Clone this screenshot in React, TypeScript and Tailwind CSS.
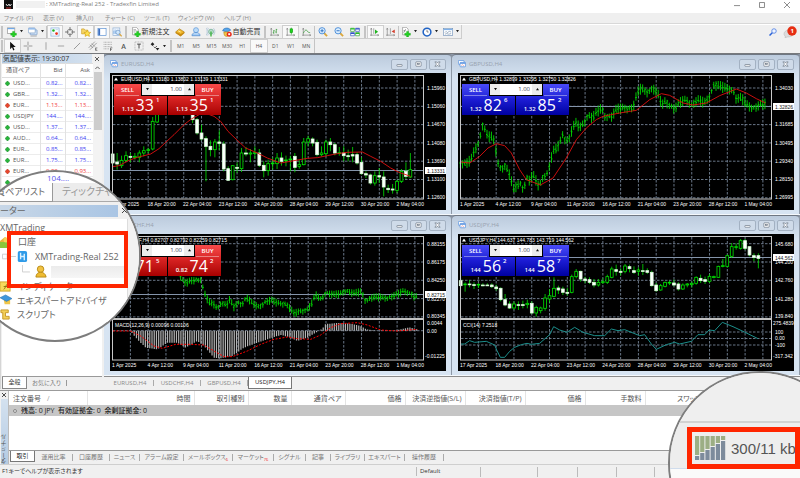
// src/App.tsx
import React from "react";

type Point = [number, number];
// open, high, low, close as chart heights, three units to a pixel
type Candle = [number, number, number, number];

const px = (value: number) => Math.round((value / 3) * 100) / 100;

const toPoints = (points: Point[]) =>
  points.map(([x, y]) => `${px(x)},${px(y)}`).join(" ");

const valueAt = (points: Point[], x: number) => {
  for (let i = 1; i < points.length; i++) {
    const [x0, y0] = points[i - 1];
    const [x1, y1] = points[i];
    if (x <= x1) return y0 + ((y1 - y0) * (x - x0)) / (x1 - x0);
  }
  return points[points.length - 1][1];
};

const eurCandles: (Candle | null)[] = [
  [243, 240, 291, 270], [267, 240, 290, 273], [278, 248, 285, 262], [262, 235, 268, 248],
  [250, 240, 268, 253], [253, 240, 260, 250], [253, 232, 268, 240], [240, 220, 250, 233],
  [232, 224, 240, 230], [228, 132, 232, 145], [147, 90, 150, 100],
  null, null, null, null, null, null, null,
  [125, 120, 150, 140], [140, 135, 185, 180], [180, 155, 202, 198], [197, 190, 325, 220],
  [220, 202, 250, 230], [230, 198, 253, 207], [207, 172, 232, 211], [213, 205, 295, 288],
  [287, 280, 323, 322], [320, 278, 322, 278], [283, 268, 300, 286], [287, 225, 297, 240],
  [240, 222, 250, 243], [243, 228, 268, 240], [240, 220, 258, 239], [240, 228, 282, 277],
  [277, 265, 313, 293], [293, 260, 308, 272], [272, 253, 290, 270], [272, 240, 288, 255],
  [255, 238, 278, 265], [263, 248, 280, 261], [260, 248, 295, 258], [250, 240, 298, 283],
  [280, 262, 287, 275], [275, 195, 277, 207], [207, 188, 220, 197], [198, 193, 220, 210],
  [208, 200, 250, 245], [245, 220, 250, 240], [242, 200, 250, 207], [207, 195, 235, 215],
  [215, 210, 247, 240], [240, 222, 248, 239], [240, 220, 265, 248], [248, 230, 265, 251],
  [245, 222, 268, 249], [245, 238, 275, 270], [268, 253, 305, 302], [302, 295, 315, 306],
  [306, 302, 335, 330], [330, 295, 338, 308], [308, 285, 330, 312], [312, 295, 370, 342],
  [346, 335, 360, 350], [348, 333, 362, 351], [352, 320, 360, 325], [325, 288, 330, 295],
  [295, 268, 318, 310], [312, 240, 315, 290],
];

const eurAverage: Point[] = [
  [8, 281], [27, 278], [57, 262], [82, 253], [122, 243], [147, 227], [167, 208], [192, 185],
  [222, 155], [244, 138], [280, 118], [312, 130], [332, 145], [354, 175], [382, 202],
  [407, 225], [442, 240], [472, 255], [512, 270], [552, 263], [592, 256], [622, 254],
  [652, 248], [682, 242], [712, 238], [757, 237], [782, 250], [812, 265], [842, 285],
  [867, 298], [902, 310],
];

const gbpTrend: Point[] = [
  [7, 270], [25, 272], [40, 260], [50, 230], [63, 210], [70, 165], [76, 150], [82, 175],
  [90, 190], [105, 194], [113, 230], [120, 270], [130, 290], [137, 275], [150, 292],
  [160, 325], [167, 350], [175, 340], [185, 330], [197, 348], [205, 315], [217, 325],
  [223, 305], [230, 315], [243, 342], [255, 310], [270, 300], [278, 260], [287, 235],
  [297, 225], [305, 210], [315, 180], [323, 205], [335, 195], [343, 165], [355, 150],
  [365, 165], [380, 145], [390, 125], [403, 135], [415, 120], [430, 105], [440, 128],
  [460, 132], [475, 110], [495, 105], [525, 105], [538, 60], [550, 45], [565, 58],
  [585, 45], [600, 65], [612, 98], [620, 85], [635, 95], [650, 108], [665, 90], [685, 80],
  [700, 95], [720, 82], [740, 90], [755, 70], [767, 35], [785, 40], [800, 45], [825, 50],
  [835, 78], [850, 75], [865, 95], [885, 105], [900, 98], [922, 93],
];

const gbpAverage: Point[] = [
  [7, 267], [35, 270], [65, 250], [90, 225], [115, 212], [140, 218], [160, 240], [185, 290],
  [205, 320], [247, 336], [285, 315], [325, 255], [355, 200], [385, 165], [415, 140],
  [435, 130], [485, 120], [535, 112], [575, 80], [610, 62], [635, 67], [675, 90], [705, 96],
  [745, 90], [785, 68], [835, 48], [865, 60], [895, 77], [922, 90],
];

const chfTrend: Point[] = [
  [205, 115], [214, 133], [227, 148], [247, 140], [272, 135], [280, 166], [287, 186],
  [297, 206], [312, 211], [322, 224], [332, 206], [344, 211], [354, 211], [360, 194],
  [370, 222], [382, 206], [397, 209], [410, 191], [427, 209], [447, 219], [462, 206],
  [482, 199], [502, 207], [527, 209], [542, 226], [552, 239], [572, 231], [592, 226],
  [604, 211], [617, 183], [632, 196], [647, 176], [672, 183], [692, 179], [707, 169],
  [732, 179], [754, 173], [767, 201], [782, 191], [802, 190], [832, 191], [857, 184],
  [882, 171], [897, 176], [907, 181], [915, 192], [922, 186],
];

const macdBars: Point[] = [
  [8, 291], [61, 291], [82, 316], [107, 341], [142, 346], [172, 326], [202, 326], [227, 341],
  [262, 321], [282, 336], [312, 371], [332, 373], [367, 366], [402, 341], [442, 326],
  [472, 316], [512, 303], [537, 309], [562, 321], [592, 311], [622, 293], [637, 284],
  [647, 270], [682, 267], [722, 269], [752, 276], [770, 286], [812, 291], [852, 291],
  [872, 286], [897, 280], [922, 286],
];

const macdSignal: Point[] = [
  [8, 291], [62, 291], [92, 306], [132, 336], [157, 343], [197, 331], [242, 331],
  [282, 333], [312, 351], [342, 368], [367, 368], [412, 351], [452, 331], [492, 316],
  [532, 309], [562, 314], [602, 316], [632, 303], [662, 281], [692, 269], [742, 266],
  [772, 273], [812, 288], [862, 291], [922, 286],
];

const jpyCandles: (Candle | null)[] = [
  [140, 133, 157, 155], [152, 145, 173, 150], [150, 138, 160, 152], [152, 145, 165, 153],
  [153, 148, 162, 151], [153, 148, 157, 154], [153, 148, 156, 154], [153, 148, 162, 158],
  [159, 152, 170, 164], [163, 160, 202, 197], [197, 180, 217, 213], [210, 202, 225, 222],
  [222, 202, 227, 210], [212, 202, 228, 213], [212, 200, 223, 213], [212, 197, 223, 208],
  [208, 202, 240, 237], [237, 215, 248, 220], [230, 218, 238, 222], [223, 180, 230, 192],
  [195, 165, 205, 185], [187, 130, 190, 163], [162, 155, 180, 168], [165, 158, 183, 175],
  [175, 162, 185, 178], [175, 122, 178, 128], [128, 105, 133, 112], [112, 110, 143, 135],
  [135, 128, 148, 140], [137, 130, 150, 145], [145, 135, 160, 153], [153, 135, 158, 145],
  [145, 133, 150, 143], [145, 122, 150, 128], [130, 98, 133, 105], [107, 92, 125, 112],
  [112, 103, 125, 115], [112, 90, 118, 96], [98, 92, 115, 104], [110, 97, 120, 115],
  [112, 100, 125, 108], [110, 90, 123, 112], [110, 103, 120, 115], [115, 110, 158, 155],
  [153, 147, 173, 170], [168, 150, 170, 155], [157, 143, 160, 145], [147, 140, 153, 145],
  [147, 137, 157, 153], [150, 145, 170, 165], [165, 148, 168, 153], [153, 147, 160, 150],
  [152, 143, 160, 148], [148, 127, 152, 130], [133, 122, 147, 140], [137, 128, 150, 142],
  [142, 120, 147, 127], [130, 125, 133, 128], [130, 95, 132, 97], [97, 75, 100, 95],
  [97, 62, 100, 65], [67, 27, 72, 38], [40, 28, 47, 38], [43, 15, 47, 20],
  [20, 15, 48, 43], [38, 37, 67, 63], [65, 58, 82, 70], [65, 58, 103, 73],
];

const cciLine: Point[] = [
  [7, 330], [20, 330], [35, 320], [50, 325], [85, 322], [110, 333], [117, 350], [127, 370],
  [140, 370], [155, 352], [170, 340], [190, 332], [207, 328], [220, 331], [245, 328],
  [275, 302], [287, 278], [305, 288], [327, 295], [350, 280], [375, 295], [410, 305],
  [440, 305], [460, 285], [480, 290], [500, 287], [545, 305], [560, 302], [580, 330],
  [595, 346], [625, 332], [650, 325], [665, 330], [700, 322], [720, 302], [740, 302],
  [753, 288], [770, 290], [793, 265], [825, 278], [855, 292], [900, 314],
];

const fromMidApril = [
  "17 Apr 2025", "18 Apr 20:00", "22 Apr 04:00", "23 Apr 12:00", "24 Apr 20:00",
  "28 Apr 04:00", "29 Apr 12:00", "30 Apr 20:00", "2 May 04:00",
];
const fromEarlyApril = [
  "1 Apr 2025", "4 Apr 12:00", "9 Apr 04:00", "11 Apr 20:00", "16 Apr 12:00",
  "21 Apr 04:00", "23 Apr 20:00", "28 Apr 12:00", "1 May 04:00",
];

const Candles: React.FC<{ data: (Candle | null)[] }> = ({ data }) => (
  <g stroke="#00e400" strokeWidth="0.8">
    {data.map((candle, i) => {
      if (!candle) return null;
      const [open, high, low, close] = candle;
      const x = px(8 + i * 13.33);
      const top = px(Math.min(open, close));
      return (
        <g key={i}>
          <line x1={x} x2={x} y1={px(high)} y2={px(low)} />
          <rect
            x={x - 1.4}
            y={top}
            width="2.8"
            height={Math.max(px(Math.abs(close - open)), 0.8)}
            fill={close > open ? "#fff" : "#000"}
            stroke={close > open ? "#d8ffd8" : "#00e400"}
          />
        </g>
      );
    })}
  </g>
);

const Bars: React.FC<{ trend: Point[]; spread: number }> = ({ trend, spread }) => {
  const start = trend[0][0];
  const end = trend[trend.length - 1][0];
  const count = Math.floor((end - start) / 6.67);
  let d = "";
  for (let i = 0; i <= count; i++) {
    const x = start + i * 6.67;
    const y = valueAt(trend, x);
    const up = spread * (0.4 + Math.abs(Math.sin(i * 12.9)));
    const down = spread * (0.4 + Math.abs(Math.sin(i * 7.3 + 1)));
    const close = y + Math.sin(i * 3.7) * spread * 0.5;
    d += `M${px(x)} ${px(y - up)}V${px(y + down)}`;
    d += `M${px(x) - 1} ${px(y)}h1M${px(x)} ${px(close)}h1`;
  }
  return <path d={d} stroke="#00d800" strokeWidth="0.9" fill="none" />;
};

const Macd = () => {
  let d = "";
  for (let x = 66; x < 922; x += 6.67) {
    d += `M${px(x)} ${px(290)}V${px(valueAt(macdBars, x))}`;
  }
  return (
    <>
      <path d={d} stroke="#b4b4b4" strokeWidth="1.2" fill="none" />
      <polyline
        points={toPoints(macdSignal)}
        fill="none"
        stroke="#f00"
        strokeWidth="1"
        strokeDasharray="2 1.5"
      />
    </>
  );
};

interface AxisLabel {
  y: number;
  text: string;
}

interface ChartProps {
  header: string;
  dates: string[];
  gridTop: number;
  prices: AxisLabel[];
  current: AxisLabel;
  subHeader?: string;
  subLevels?: number[];
  children: React.ReactNode;
}

const Chart: React.FC<ChartProps> = ({
  header,
  dates,
  gridTop,
  prices,
  current,
  subHeader,
  subLevels = [],
  children,
}) => {
  const rows = subHeader ? 5 : 7;
  return (
    <svg
      viewBox="0 0 336 137"
      className="block w-full overflow-visible bg-black font-['Liberation_Sans',sans-serif] text-[5px]"
    >
      <g stroke="#8494aa" strokeWidth="0.8" strokeDasharray="2.5 1.5">
        {Array.from({ length: 17 }, (_, i) => (
          <line key={i} x1={20.4 + i * 17.78} x2={20.4 + i * 17.78} y1="3" y2="125" />
        ))}
        {Array.from({ length: rows }, (_, i) => (
          <line key={i} x1="3" x2="313" y1={gridTop + i * 18.3} y2={gridTop + i * 18.3} />
        ))}
        {subLevels.map((y) => (
          <line key={y} x1="3" x2="313" y1={y} y2={y} />
        ))}
      </g>
      <line x1="3" x2="313" y1={current.y} y2={current.y} stroke="#8494aa" />
      {children}
      <rect x="2.5" y="2.5" width="311" height="123.5" fill="none" stroke="#c9c9c9" />
      {subHeader && <rect x="2" y="84" width="312" height="2" fill="#c0c0c0" />}
      <path d="M4 7.5l2-3 2 3z" fill="#fff" />
      <g fill="#fff">
        <text x="11" y="8">{header}</text>
        {subHeader && <text x="5" y="93">{subHeader}</text>}
        {prices.map((price) => (
          <text key={price.text} x={price.text.length > 7 ? 315 : 317} y={price.y + 2}>
            {price.text}
          </text>
        ))}
        {dates.map((date, i) => (
          <text key={date} x={2 + i * 35.55} y="133">{date}</text>
        ))}
      </g>
      <rect x="315" y={current.y - 3.5} width="21" height="7" fill="#fff" />
      <text x="317" y={current.y + 2} fill="#222">{current.text}</text>
    </svg>
  );
};

interface Quote {
  lead: string;
  big: string;
  small: string;
}

interface TradePanelProps {
  red?: boolean;
  sell: Quote;
  buy: Quote;
}

const QuoteText: React.FC<{ quote: Quote }> = ({ quote }) => (
  <span className="flex h-[19px] items-end justify-center pb-[2px]">
    <span className="text-[6px] leading-[8px] font-semibold">{quote.lead}</span>
    <span className="ml-[2px] text-[16px] leading-[16px]">{quote.big}</span>
    <span className="ml-[2px] self-start text-[6px] leading-[8px] font-semibold">
      {quote.small}
    </span>
  </span>
);

const TradePanel: React.FC<TradePanelProps> = ({ red, sell, buy }) => {
  const side = red
    ? "bg-linear-to-b from-[#f84a4a] via-[#d42020] to-[#a80000] text-white"
    : "bg-linear-to-b from-[#4a4af8] via-[#1c1cd4] to-[#0000a0] text-white";
  return (
    <div className="absolute top-[11px] left-[4px] grid w-[107px] grid-cols-2 gap-px bg-black">
      <button type="button" className={side}>
        <span className="ml-[2px] block h-[12px] w-[23px] border-b border-white/40 text-center text-[6px] leading-[12px] font-semibold">
          SELL
        </span>
        <QuoteText quote={sell} />
      </button>
      <button type="button" className={side}>
        <span className="mr-[2px] ml-auto block h-[12px] w-[23px] border-b border-white/40 text-center text-[6px] leading-[12px] font-semibold">
          BUY
        </span>
        <QuoteText quote={buy} />
      </button>
      <div className="absolute top-0 left-[27px] flex h-[12px] w-[54px] border border-t-0 border-black bg-[#ececec]">
        <button type="button" aria-label="Less" className="flex w-[10px] items-center justify-center">
          <svg viewBox="0 0 4 3" className="w-[3px]"><path d="M0 0h4L2 3z" fill="#111" /></svg>
        </button>
        <input
          aria-label="Volume"
          defaultValue="1.00"
          className="w-0 flex-1 bg-white pr-[2px] text-right text-[6px] text-[#445]"
        />
        <button type="button" aria-label="More" className="flex w-[10px] items-center justify-center">
          <svg viewBox="0 0 4 3" className="w-[3px]"><path d="M0 3h4L2 0z" fill="#111" /></svg>
        </button>
      </div>
    </div>
  );
};

const WindowIcon = () => (
  <svg viewBox="0 0 10 9" className="w-[8px]">
    <rect x="0.5" y="0.5" width="7" height="5" rx="1" fill="#fff" stroke="#5a94e0" />
    <rect x="2.5" y="3" width="7" height="5.5" rx="1" fill="#fff" stroke="#5a94e0" />
    <path d="M2.5 4h7" stroke="#5a94e0" strokeWidth="1.5" />
    <path d="M4 7l1.5-1.2L7 7l1-1" stroke="#e07070" strokeWidth="0.6" fill="none" />
  </svg>
);

const windowButtons = [
  { name: "Minimize", shape: <rect x="1" y="4" width="6" height="2" rx="0.5" /> },
  {
    name: "Maximize",
    shape: (
      <>
        <rect x="1" y="1" width="6" height="5" rx="0.5" />
        <rect x="3" y="3" width="2" height="1" />
      </>
    ),
  },
  {
    name: "Close",
    shape: <path d="M1 1h2l1 1.4L5 1h2L5.2 3.5 7 6H5L4 4.6 3 6H1l1.8-2.5z" />,
  },
];

interface ChartWindowProps {
  title: string;
  trade: TradePanelProps;
  chart: React.ReactNode;
}

const ChartWindow: React.FC<ChartWindowProps> = ({ title, trade, chart }) => (
  <section className="rounded-t-[4px] border-t border-[#6f7782] bg-linear-to-b from-[#bccbdd] to-[#d7e4f2] to-15% px-[6px] pb-[5px] shadow-[inset_0_-1px_0_#f4f8fc,inset_-1px_0_0_#8d98a6]">
    <header className="flex h-[18px] items-center">
      <WindowIcon />
      <h2 className="ml-[3px] flex-1 text-[6px] text-[#98a2af]">{title}</h2>
      <div className="flex gap-[2px]">
        {windowButtons.map((button) => (
          <button
            key={button.name}
            type="button"
            aria-label={button.name}
            className="flex h-[11px] w-[17px] items-center justify-center rounded-[2px] border border-[#a3b1c2] bg-[#cfdbe9]"
          >
            <svg viewBox="0 0 8 7" className="w-[7px]" fill="#fff" stroke="#6f7a88" strokeWidth="0.8">
              {button.shape}
            </svg>
          </button>
        ))}
      </div>
    </header>
    <div className="relative">
      {chart}
      <TradePanel {...trade} />
    </div>
  </section>
);

/* Toolbar drawings */

const Icon: React.FC<{ children: React.ReactNode }> = ({ children }) => (
  <svg viewBox="0 0 16 16" className="size-[10px] shrink-0" fill="none">
    {children}
  </svg>
);

const Plus = () => (
  <path d="M9 7h3v3h3v3h-3v3H9v-3H6v-3h3z" fill="#22d422" stroke="#0a9a0a" strokeWidth="0.6" />
);

const axes = <path d="M2 2v12M0 13h14M1 4l1-2 1 2M12 12l2 1-2 1" stroke="#777" />;

const icons = {
  newChart: (
    <Icon>
      <rect x="0.5" y="1.5" width="12" height="9" fill="#fff" stroke="#888" />
      <path d="M1 2.5h11" stroke="#6fa8e8" strokeWidth="2" />
      <Plus />
    </Icon>
  ),
  profiles: (
    <Icon>
      <rect x="3.5" y="4.5" width="11" height="8" rx="1" fill="#cfe2f8" stroke="#6b90bd" />
      <rect x="0.5" y="1.5" width="11" height="8" rx="1" fill="#fff" stroke="#6b90bd" />
      <path d="M1 3h10" stroke="#7fb0ea" strokeWidth="2" />
      <path d="M4 14.5h10" stroke="#888" />
    </Icon>
  ),
  marketWatch: (
    <Icon>
      <rect x="1.5" y="1.5" width="13" height="13" fill="#f5faff" stroke="#7da7dd" />
      <circle cx="5.5" cy="5.5" r="2" fill="#1fb41f" />
      <circle cx="10.5" cy="10.5" r="2.2" fill="#ec2f1b" />
      <path d="M9 4h4M3 11h3" stroke="#b8ccdf" />
    </Icon>
  ),
  crosshairWindow: (
    <Icon>
      <circle cx="8" cy="8" r="4.5" stroke="#555" />
      <path d="M8 0v6M8 10v6M0 8h6M10 8h6" stroke="#555" strokeWidth="1.2" />
    </Icon>
  ),
  navigator: (
    <Icon>
      <path d="M1 3h4l1 2h5v6H1z" fill="#f7d768" stroke="#c89a20" />
      <path d="M10 5l1.7 3.3 3.8.4-2.8 2.5.8 3.8L10 13.2 6.5 15l.8-3.8L4.5 8.7l3.8-.4z" fill="#ffe14d" stroke="#cf9d12" />
    </Icon>
  ),
  terminal: (
    <Icon>
      <rect x="1.5" y="2.5" width="13" height="11" fill="#fff" stroke="#4c87cf" />
      <path d="M3.500 3v10" stroke="#3c6fc0" strokeWidth="3" />
    </Icon>
  ),
  tester: (
    <Icon>
      <rect x="1.5" y="1.5" width="11" height="12" fill="#eef5fd" stroke="#88a9cf" />
      <path d="M3 11V6M5 11V4M7 11V7" stroke="#5b9be0" />
      <circle cx="9.5" cy="8.5" r="3.5" fill="#cfe6fb" stroke="#5686bf" />
      <path d="M12 11l3.5 4" stroke="#d8a43c" strokeWidth="2" />
    </Icon>
  ),
  newOrder: (
    <Icon>
      <path d="M2.5.5h6l3 3v9h-9z" fill="#fff" stroke="#888" />
      <path d="M4 4h4M4 6h5M4 8h3" stroke="#999" />
      <Plus />
    </Icon>
  ),
  gold: (
    <Icon>
      <path d="M1 8l6-5 8 5-6 6z" fill="#f0b82a" stroke="#a8750a" />
      <path d="M1 8l8 3 6-3v2l-6 5-8-5z" fill="#c88a10" />
      <path d="M5 6l4 2" stroke="#fff0b0" strokeWidth="1.5" />
    </Icon>
  ),
  community: (
    <Icon>
      <circle cx="8" cy="5" r="4" fill="#bcdcf8" stroke="#4f8fd8" />
      <path d="M1.5 14c0-4 3-5 6.5-5s6.5 1 6.5 5z" fill="#8fc1f3" stroke="#4583cc" />
      <path d="M4 11h8" stroke="#fff" />
    </Icon>
  ),
  signals: (
    <Icon>
      <path d="M4 2a8 8 0 000 11M12 2a8 8 0 010 11M2 1a10 10 0 000 13" stroke="#9ab6cf" />
      <circle cx="8" cy="7.5" r="4" fill="#b7dcc9" stroke="#5fa28a" />
      <path d="M8 7v8" stroke="#2fae2f" strokeWidth="2" />
    </Icon>
  ),
  autoTrading: (
    <Icon>
      <path d="M1 6c1-5 10-6 13-1l-6 3z" fill="#55a5ea" stroke="#2c6fb6" />
      <path d="M3 8h9c0 4-2 7-5 7s-4-3-4-7z" fill="#f3c74c" stroke="#b98714" />
      <circle cx="11.5" cy="11.5" r="4" fill="#e8281a" />
      <rect x="10" y="10" width="3" height="3" fill="#fff" />
    </Icon>
  ),
  barChart: (
    <Icon>
      {axes}
      <path d="M6 5v6M4.5 9H6M6 6h1.5M10 3v7M8.5 8H10M10 4h1.5" stroke="#3b9a3b" strokeWidth="1.2" />
    </Icon>
  ),
  candleChart: (
    <Icon>
      {axes}
      <path d="M8.5 1v11" stroke="#0a9a0a" />
      <rect x="6.5" y="3" width="4" height="6" fill="#1fd81f" stroke="#0a9a0a" />
    </Icon>
  ),
  lineChart: (
    <Icon>
      {axes}
      <path d="M2 10c3-6 5-6 6-4s3 3 5 3" stroke="#3b9a3b" strokeWidth="1.2" />
    </Icon>
  ),
  zoomIn: (
    <Icon>
      <path d="M9.5 9.5l5 5" stroke="#dba73a" strokeWidth="3" />
      <circle cx="6.5" cy="6" r="5" fill="#dcefff" stroke="#3f86d6" strokeWidth="1.4" />
      <path d="M6.5 3.5v5M4 6h5" stroke="#2c6fc2" strokeWidth="1.5" />
    </Icon>
  ),
  zoomOut: (
    <Icon>
      <path d="M9.5 9.5l5 5" stroke="#dba73a" strokeWidth="3" />
      <circle cx="6.5" cy="6" r="5" fill="#dcefff" stroke="#3f86d6" strokeWidth="1.4" />
      <path d="M4 6h5" stroke="#2c6fc2" strokeWidth="1.5" />
    </Icon>
  ),
  tile: (
    <Icon>
      <path d="M1 2h6v5H1zM9 9h6v5H9z" fill="#fff" stroke="#1e9c1e" />
      <path d="M9 2h6v5H9zM1 9h6v5H1z" fill="#fff" stroke="#2748b8" />
      <path d="M1 3h6M9 10h6" stroke="#25c025" strokeWidth="2" />
      <path d="M9 3h6M1 10h6" stroke="#2f52cc" strokeWidth="2" />
    </Icon>
  ),
  autoScroll: (
    <Icon>
      {axes}
      <path d="M6 2v9" stroke="#777" />
      <path d="M8 4l5 3.5L8 11z" fill="#1fb41f" />
    </Icon>
  ),
  chartShift: (
    <Icon>
      {axes}
      <path d="M7 2v9" stroke="#777" />
      <path d="M14 4L9 7l5 3z" fill="#d23b2a" />
    </Icon>
  ),
  indicators: (
    <Icon>
      <path d="M2.5.5h6l3 3v9h-9z" fill="#fff" stroke="#888" />
      <path d="M4 9c2 0 1-5 4-5M4 6h3" stroke="#666" />
      <Plus />
    </Icon>
  ),
  periods: (
    <Icon>
      <circle cx="8" cy="8" r="6.2" fill="#fff" stroke="#1f62c4" strokeWidth="2.4" />
      <path d="M8 4.5V8h2.5" stroke="#444" />
    </Icon>
  ),
  templates: (
    <Icon>
      <rect x="0.5" y="2.5" width="15" height="11" fill="#fff" stroke="#6d8fb8" />
      <path d="M1 4h14" stroke="#7fb0ea" strokeWidth="2" />
      <path d="M3 9l2-2 2 2 3-2 3 1M3 11.5l3-1 3 1 4-1" stroke="#6c87a5" />
    </Icon>
  ),
  cursor: (
    <Icon>
      <path d="M5 1v12l3-3 2 5 2-1-2-4.5h4z" fill="#111" />
    </Icon>
  ),
  cross: (
    <Icon>
      <path d="M8 1v6M8 9v6M1 8h6M9 8h6" stroke="#666" />
    </Icon>
  ),
  vertical: <Icon><path d="M8 2v12" stroke="#777" /></Icon>,
  horizontal: <Icon><path d="M3 8h10" stroke="#777" /></Icon>,
  trend: <Icon><path d="M3 13L13 3" stroke="#666" /></Icon>,
  channel: (
    <Icon>
      <path d="M1 11L11 1M3 14L14 3M3 6l5 5M6 4l5 5" stroke="#777" />
      <path d="M12 11h3M12 13h2M12 11v4h3" stroke="#555" />
    </Icon>
  ),
  fibonacci: (
    <Icon>
      <path d="M1 2h13M1 5.5h13M1 9h13M1 12.5h9" stroke="#888" strokeDasharray="1.5 0.8" />
      <path d="M12 11v5M12 11h3M12 13.5h2" stroke="#444" />
    </Icon>
  ),
  textLabel: (
    <Icon>
      <rect x="1.5" y="1.5" width="13" height="13" stroke="#999" strokeDasharray="1.5 1" />
      <path d="M5 5h6M8 5v7" stroke="#444" strokeWidth="1.5" />
    </Icon>
  ),
  arrows: (
    <Icon>
      <path d="M1 5l3-3 3 3-3 3z" fill="#222" />
      <path d="M6 9l2 2 3-3" stroke="#222" strokeWidth="1.2" />
      <path d="M9 11h6l-3 4z" fill="#222" />
    </Icon>
  ),
};

interface ToolProps {
  name: string;
  icon: React.ReactNode;
  pressed?: boolean;
  menu?: boolean;
  label?: string;
}

const Tool: React.FC<ToolProps> = ({ name, icon, pressed, menu, label }) => (
  <button
    type="button"
    aria-label={name}
    className={
      pressed
        ? "flex h-[14px] flex-1 items-center justify-center border border-[#cfcfcf] bg-[#f9f9f9]"
        : "flex h-[14px] flex-1 items-center justify-center"
    }
  >
    {icon}
    {label && <span className="ml-px whitespace-nowrap text-[#333]">{label}</span>}
    {menu && (
      <svg viewBox="0 0 4 3" className="ml-[3px] w-[3px] shrink-0">
        <path d="M0 0h4L2 3z" fill="#222" />
      </svg>
    )}
  </button>
);

const Handle = () => <span className="mx-px h-[12px] w-[2px] border-x border-[#c4c4c4]" />;

const Divider = () => <span className="h-[12px] w-px bg-[#c4c4c4]" />;

const menus = [
  { label: "ファイル (F)", width: "w-[39px]" },
  { label: "表示 (V)", width: "w-[33px]" },
  { label: "挿入(I)", width: "w-[29px]" },
  { label: "チャート (C)", width: "w-[39px]" },
  { label: "ツール (T)", width: "w-[34px]" },
  { label: "ウィンドウ (W)", width: "w-[46px]" },
  { label: "ヘルプ (H)", width: "w-[34px]" },
];

const timeframes = ["M1", "M5", "M15", "M30", "H1", "H4", "D1", "W1", "MN"];

const TopBars = () => (
  <header>
    <div className="flex h-[13px] items-center bg-white pb-[4px] pl-[4px] text-[6px] text-[#808080]">
      <svg viewBox="0 0 9 9" className="w-[9px]">
        <rect width="9" height="9" fill="#111" />
        <path d="M2 4l1.5 2L5 4l1 2 1.5-2" stroke="#ddd" fill="none" />
        <path d="M2 8h5" stroke="#c33" />
      </svg>
      <span className="ml-[3px] h-[7px] w-[29px] bg-[#f1f1f1]" />
      <h1 className="ml-px flex-1">: XMTrading-Real 252 - Tradexfin Limited</h1>
      <div className="flex items-center gap-[19px] pr-[10px]">
        <svg viewBox="0 0 5 5" className="w-[6px]" stroke="#777" fill="none" strokeWidth="0.7">
          <path d="M0 3h5" />
        </svg>
        <svg viewBox="0 0 5 5" className="w-[6px]" stroke="#777" fill="none" strokeWidth="0.7">
          <rect x="0.5" y="0.5" width="4" height="4" />
        </svg>
        <svg viewBox="0 0 5 5" className="w-[6px]" stroke="#777" fill="none" strokeWidth="0.7">
          <path d="M0 0l5 5M5 0L0 5" />
        </svg>
      </div>
    </div>

    <nav className="flex h-[11px] items-center border-b border-[#d8d8d8] bg-[#efefef] pl-[4px] text-[6px] text-[#8c8c8c]">
      {menus.map((menu) => (
        <a key={menu.label} href="#menu" className={`${menu.width} whitespace-nowrap`}>
          {menu.label}
        </a>
      ))}
    </nav>

    <div className="flex h-[15px] items-center border-t border-white bg-[#f0f0f0] text-[7px]">
      <div className="flex h-full items-center border-r border-b border-[#cdcdcd]">
        <Handle />
        <div className="flex w-[42px]">
          <Tool name="New chart" icon={icons.newChart} menu />
          <Tool name="Profiles" icon={icons.profiles} menu />
        </div>
        <Divider />
        <div className="flex w-[77px]">
          <Tool name="Market watch" icon={icons.marketWatch} pressed />
          <Tool name="Data window" icon={icons.crosshairWindow} />
          <Tool name="Navigator" icon={icons.navigator} pressed />
          <Tool name="Terminal" icon={icons.terminal} pressed />
          <Tool name="Strategy tester" icon={icons.tester} />
        </div>
        <Handle />
        <div className="flex w-[44px]">
          <Tool name="New order" icon={icons.newOrder} label="新規注文" />
        </div>
        <div className="flex w-[47px]">
          <Tool name="MetaEditor" icon={icons.gold} />
          <Tool name="Community" icon={icons.community} />
          <Tool name="Signals" icon={icons.signals} />
        </div>
        <div className="flex w-[44px]">
          <Tool name="Auto trading" icon={icons.autoTrading} label="自動売買" />
        </div>
        <Handle />
        <div className="flex w-[47px]">
          <Tool name="Bar chart" icon={icons.barChart} />
          <Tool name="Candlesticks" icon={icons.candleChart} pressed />
          <Tool name="Line chart" icon={icons.lineChart} />
        </div>
        <Divider />
        <div className="flex w-[48px]">
          <Tool name="Zoom in" icon={icons.zoomIn} />
          <Tool name="Zoom out" icon={icons.zoomOut} />
          <Tool name="Tile windows" icon={icons.tile} />
        </div>
        <Handle />
        <div className="flex w-[31px]">
          <Tool name="Auto scroll" icon={icons.autoScroll} pressed />
          <Tool name="Chart shift" icon={icons.chartShift} />
        </div>
        <Divider />
        <div className="flex w-[62px]">
          <Tool name="Indicators" icon={icons.indicators} menu />
          <Tool name="Periods" icon={icons.periods} menu />
          <Tool name="Templates" icon={icons.templates} menu />
        </div>
      </div>
      <div className="ml-auto flex items-center gap-[6px] pr-[3px]">
        <svg viewBox="0 0 16 16" className="w-[8px]" fill="none">
          <path d="M7 9l-6 6" stroke="#2b62d9" strokeWidth="3" />
          <circle cx="10" cy="6" r="4.5" fill="#eef4ff" stroke="#3f74e0" strokeWidth="1.5" />
        </svg>
        <svg viewBox="0 0 14 12" className="w-[14px]">
          <path d="M1 8c0-5 9-5 9-1s-4 4-6 4l-2 1 .4-2C1.500 10 1 9 1 8z" fill="#dcdcdc" stroke="#b5b5b5" strokeWidth="0.5" />
          <circle cx="9" cy="5" r="4.7" fill="#e62e12" />
          <text x="7.5" y="7" fill="#fff" className="text-[6px] font-bold">1</text>
        </svg>
      </div>
    </div>

    <div className="flex h-[15px] items-center border-b border-[#77797c] bg-[#f0f0f0]">
      <div className="flex h-full items-center border-r border-[#c4c4c4]">
        <Handle />
        <div className="flex w-[31px]">
          <Tool name="Cursor" icon={icons.cursor} pressed />
          <Tool name="Crosshair" icon={icons.cross} />
        </div>
        <span className="w-[3px]" />
        <div className="flex w-[109px]">
          <Tool name="Vertical line" icon={icons.vertical} />
          <Tool name="Horizontal line" icon={icons.horizontal} />
          <Tool name="Trendline" icon={icons.trend} />
          <Tool name="Channel" icon={icons.channel} />
          <Tool name="Fibonacci" icon={icons.fibonacci} />
          <Tool
            name="Text"
            icon={<span className="text-[7px] font-semibold text-[#555]">A</span>}
          />
          <Tool name="Text label" icon={icons.textLabel} />
        </div>
        <div className="flex w-[22px]">
          <Tool name="Arrows" icon={icons.arrows} menu />
        </div>
        <Handle />
        <div className="flex w-[141px] text-[5px] text-[#555]">
          {timeframes.map((frame) => (
            <Tool
              key={frame}
              name={frame}
              icon={<span>{frame}</span>}
              pressed={frame === "H4"}
            />
          ))}
        </div>
      </div>
    </div>
  </header>
);

const quotes = [
  { symbol: "USD...", bid: "0.82...", ask: "0.82...", up: true },
  { symbol: "GBR...", bid: "1.32...", ask: "1.32...", up: true },
  { symbol: "EUR...", bid: "1.13...", ask: "1.13...", up: false },
  { symbol: "USDJPY", bid: "144....", ask: "144....", up: true },
  { symbol: "USD...", bid: "1.37...", ask: "1.37...", up: true },
  { symbol: "AUD...", bid: "0.64...", ask: "0.64...", up: true },
  { symbol: "EUR...", bid: "0.85...", ask: "0.85...", up: true },
  { symbol: "EUR...", bid: "1.75...", ask: "1.75...", up: true },
  { symbol: "EUR...", bid: "0.93...", ask: "0.93...", up: false },
  { symbol: "", bid: "", ask: "", up: true },
];

const SidePanel = () => (
  <aside className="flex w-[102px] shrink-0 flex-col border-l border-[#d5d5d5] bg-[#f0f0f0] pl-px text-[6px]">
    <div className="flex h-[9px] items-center">
      <h2 className="flex-1 bg-linear-to-r from-[#b4cbe3] to-[#d4e1ef] pl-px text-[7px] leading-[9px] whitespace-nowrap text-[#333]">
        気配値表示: 19:30:07
      </h2>
      <svg viewBox="0 0 5 5" className="mx-[3px] w-[4px]" stroke="#333">
        <path d="M0 0l5 5M5 0L0 5" />
      </svg>
    </div>
    <div className="flex flex-1 bg-white">
      <table className="h-fit flex-1 table-fixed border-collapse">
        <thead className="text-[#555]">
          <tr className="h-[14px] border-y border-[#ddd]">
            <th className="w-[38px] pl-[4px] text-left font-normal">通貨ペア</th>
            <th className="w-[25px] border-x border-[#e2e2e2] pr-[2px] text-right font-normal">Bid</th>
            <th className="pr-[3px] text-right font-normal">Ask</th>
          </tr>
        </thead>
        <tbody>
          {quotes.map((quote, i) => (
            <tr key={i} className="h-[11px] border-b border-[#ececec] leading-[8px]">
              <td className="text-[#555]">
                <span className="flex items-center gap-[3px] pl-[3px]">
                  <svg viewBox="0 0 6 6" className="w-[5px]">
                    <path
                      d="M3 0l3 3-3 3-3-3z"
                      fill={quote.up ? "#27b53a" : "#e8452c"}
                      stroke={quote.up ? "#0d7a1d" : "#a8260f"}
                      strokeWidth="0.6"
                    />
                  </svg>
                  {quote.symbol}
                </span>
              </td>
              <td
                className={
                  quote.up
                    ? "border-x border-[#e2e2e2] pr-[2px] text-right text-[#3d3df2]"
                    : "border-x border-[#e2e2e2] pr-[2px] text-right text-[#f23d3d]"
                }
              >
                {quote.bid}
              </td>
              <td
                className={
                  quote.up
                    ? "pr-[2px] text-right text-[#3d3df2]"
                    : "pr-[2px] text-right text-[#f23d3d]"
                }
              >
                {quote.ask}
              </td>
            </tr>
          ))}
        </tbody>
      </table>
      <div className="flex h-[124px] w-[9px] flex-col items-center bg-[#f3f3f3] pt-[3px]">
        <svg viewBox="0 0 6 4" className="w-[5px]" fill="none" stroke="#444">
          <path d="M0 4l3-3 3 3" />
        </svg>
        <span className="mt-[3px] h-[58px] w-[8px] bg-[#cdcdcd]" />
      </div>
    </div>
    <div className="flex h-[13px] border-t border-[#999]">
      <button type="button" className="w-[25px] border-x border-b border-[#888] bg-white text-[#333]">
        全般
      </button>
      <button type="button" className="my-[3px] flex w-[40px] items-center justify-center border-r border-[#999] text-[#777]">
        お気に入り
      </button>
    </div>
  </aside>
);

const chartTabs = ["EURUSD,H4", "USDCHF,H4", "GBPUSD,H4"];

const Workspace = () => (
  <main className="min-w-0 flex-1">
    <div className="grid grid-cols-2 bg-[#8b96a5]">
      <ChartWindow
        title="EURUSD,H4"
        trade={{
          red: true,
          sell: { lead: "1.13", big: "33", small: "1" },
          buy: { lead: "1.13", big: "35", small: "1" },
        }}
        chart={
          <Chart
            header="EURUSD,H4  1.13180 1.13802 1.13139 1.13331"
            dates={fromMidApril}
            gridTop={15}
            prices={[
              { y: 15, text: "1.15960" },
              { y: 33, text: "1.15060" },
              { y: 51, text: "1.14670" },
              { y: 70, text: "1.14080" },
              { y: 88, text: "1.13690" },
              { y: 106, text: "1.13100" },
              { y: 124, text: "1.12600" },
            ]}
            current={{ y: 97.5, text: "1.13331" }}
          >
            <Candles data={eurCandles} />
            <polyline points={toPoints(eurAverage)} fill="none" stroke="#e01010" strokeWidth="0.9" />
          </Chart>
        }
      />
      <ChartWindow
        title="GBPUSD,H4"
        trade={{
          sell: { lead: "1.32", big: "82", small: "6" },
          buy: { lead: "1.32", big: "85", small: "2" },
        }}
        chart={
          <Chart
            header="GBPUSD,H4  1.32899 1.33295 1.32750 1.32826"
            dates={fromEarlyApril}
            gridTop={15}
            prices={[
              { y: 15, text: "1.34030" },
              { y: 51, text: "1.31685" },
              { y: 70, text: "1.30495" },
              { y: 88, text: "1.29340" },
              { y: 106, text: "1.28150" },
              { y: 124, text: "1.26995" },
            ]}
            current={{ y: 33.5, text: "1.32826" }}
          >
            <Bars trend={gbpTrend} spread={12} />
            <polyline points={toPoints(gbpAverage)} fill="none" stroke="#e01010" strokeWidth="0.9" />
          </Chart>
        }
      />
      <ChartWindow
        title="USDCHF,H4"
        trade={{
          red: true,
          sell: { lead: "0.82", big: "71", small: "5" },
          buy: { lead: "0.82", big: "74", small: "2" },
        }}
        chart={
          <Chart
            header="USDCHF,H4  0.82707 0.82792 0.82259 0.82715"
            dates={fromEarlyApril}
            gridTop={9.7}
            prices={[
              { y: 10, text: "0.88155" },
              { y: 28, text: "0.86175" },
              { y: 46, text: "0.84250" },
              { y: 65, text: "0.82270" },
              { y: 82, text: "0.80345" },
              { y: 89, text: "0.0044" },
              { y: 97, text: "0.00" },
              { y: 122, text: "-0.01225" },
            ]}
            current={{ y: 60.5, text: "0.82715" }}
            subHeader="MACD(12,26,9) 0.00096 0.00106"
            subLevels={[96.7]}
          >
            <Bars trend={chfTrend} spread={9} />
            <Macd />
          </Chart>
        }
      />
      <ChartWindow
        title="USDJPY,H4"
        trade={{
          sell: { lead: "144", big: "56", small: "2" },
          buy: { lead: "144", big: "58", small: "7" },
        }}
        chart={
          <Chart
            header="USDJPY,H4  144.637 144.783 143.719 144.562"
            dates={fromMidApril}
            gridTop={9.7}
            prices={[
              { y: 10, text: "145.680" },
              { y: 28, text: "144.200" },
              { y: 46, text: "142.760" },
              { y: 65, text: "141.280" },
              { y: 82, text: "139.840" },
              { y: 89, text: "275.4839" },
              { y: 98, text: "100" },
              { y: 104, text: "0.00" },
              { y: 111, text: "-100" },
              { y: 122, text: "-317.342" },
            ]}
            current={{ y: 23.5, text: "144.562" }}
            subHeader="CCI(14) 7.2518"
            subLevels={[98, 104.5, 111]}
          >
            <Candles data={jpyCandles} />
            <polyline points={toPoints(cciLine)} fill="none" stroke="#1c8f8c" strokeWidth="1" />
          </Chart>
        }
      />
    </div>
    <div className="flex h-[13px] border-t border-[#8c8c8c] bg-[#f0f0f0] text-[6px] text-[#888]">
      <span className="w-[3px]" />
      {chartTabs.map((tab) => (
        <button key={tab} type="button" className="my-[3px] flex w-[47px] items-center justify-center border-r border-[#aaa]">
          {tab}
        </button>
      ))}
      <button type="button" className="w-[44px] border-x border-b border-[#777] bg-white text-[#222]">
        USDJPY,H4
      </button>
    </div>
  </main>
);

const orderColumns = [
  { label: "時間", width: "w-[107px]" },
  { label: "取引種別", width: "w-[54px]" },
  { label: "数量", width: "w-[43px]" },
  { label: "通貨ペア", width: "w-[54px]" },
  { label: "価格", width: "w-[60px]" },
  { label: "決済逆指値(S/L)", width: "w-[60px]" },
  { label: "決済指値(T/P)", width: "w-[60px]" },
  { label: "価格", width: "w-[60px]" },
  { label: "手数料", width: "w-[60px]" },
  { label: "スワップ", width: "w-[60px]" },
];

const terminalTabs = [
  { label: "運用比率", width: "w-[38px]" },
  { label: "口座履歴", width: "w-[37px]" },
  { label: "ニュース", width: "w-[30px]" },
  { label: "アラーム設定", width: "w-[44px]" },
  { label: "メールボックス", width: "w-[49px]", count: "6" },
  { label: "マーケット", width: "w-[41px]", count: "76" },
  { label: "シグナル", width: "w-[32px]" },
  { label: "記事", width: "w-[25px]" },
  { label: "ライブラリ", width: "w-[34px]" },
  { label: "エキスパート", width: "w-[40px]" },
  { label: "操作履歴", width: "w-[39px]" },
];

const Terminal = () => (
  <section className="flex h-[74px] border-t border-[#9b9b9b] bg-[#f0f0f0] text-[6px]">
    <div className="flex w-[8px] shrink-0 flex-col items-center">
      <svg viewBox="0 0 5 5" className="my-[2px] w-[4px]" stroke="#222">
        <path d="M0 0l5 5M5 0L0 5" />
      </svg>
      <h2 className="w-[7px] flex-1 rotate-180 bg-linear-to-b from-[#b4cbe3] to-[#d4e1ef] text-[6px] leading-[7px] text-[#555] [writing-mode:vertical-rl]">
        ターミナル
      </h2>
    </div>
    <div className="flex min-w-0 flex-1 flex-col border-l border-[#bbb]">
      <div className="flex-1 overflow-hidden bg-white">
        <table className="w-full table-fixed border-collapse text-[7px]">
          <thead>
            <tr className="h-[14px] text-[#555]">
              <th className="w-[78px] border-r border-[#e4e4e4] pl-[4px] text-left font-normal">
                注文番号<span className="ml-[6px] text-[#999]">/</span>
              </th>
              {orderColumns.map((column, i) => (
                <th
                  key={i}
                  className={`${column.width} border-r border-[#e4e4e4] pr-[3px] text-right font-normal whitespace-nowrap`}
                >
                  {column.label}
                </th>
              ))}
              <th />
            </tr>
          </thead>
          <tbody>
            <tr className="h-[11px] bg-[#c6c6c6]">
              <td colSpan={12} className="text-[#222]">
                <span className="flex items-center gap-[4px] pl-[4px] font-medium whitespace-pre">
                  <span className="size-[4px] rounded-full border border-[#888] bg-[#ddd]" />
                  残高: 0 JPY  有効証拠金: 0  余剰証拠金: 0
                </span>
              </td>
            </tr>
          </tbody>
        </table>
      </div>
      <div className="flex h-[14px] border-t border-[#999] text-[#777]">
        <span className="w-px" />
        <button type="button" className="mb-[2px] w-[25px] border-x border-b border-[#777] bg-white text-[#222]">
          取引
        </button>
        {terminalTabs.map((tab) => (
          <button
            key={tab.label}
            type="button"
            className={`${tab.width} my-[3px] flex items-center justify-center border-r border-[#aaa] whitespace-nowrap`}
          >
            {tab.label}
            {tab.count && <span className="mt-[4px] text-[4px] text-[#f02020]">{tab.count}</span>}
          </button>
        ))}
      </div>
    </div>
  </section>
);

const StatusBar = () => (
  <footer className="flex h-[14px] items-center border-t border-[#cfcfcf] bg-[#f0f0f0] text-[6px] text-[#333]">
    <span className="w-[416px] pl-[2px]">F1キーでヘルプが表示されます</span>
    <span className="w-[64px] border-l border-[#bbb] pl-[3px]">Default</span>
    <span className="h-[10px] w-[57px] border-l border-[#bbb]" />
    <span className="h-[10px] w-[40px] border-l border-[#bbb]" />
    <span className="h-[10px] w-[39px] border-l border-[#bbb]" />
    <span className="h-[10px] w-[38px] border-l border-[#bbb]" />
    <span className="h-[10px] border-l border-[#bbb]" />
  </footer>
);

const NavigatorLens = () => (
  <div className="absolute top-[170px] left-[-31px] size-[172px] overflow-hidden rounded-full border-2 border-[#7d7d7d] bg-white pl-[29px] text-[9px] leading-[11px] text-[#666]">
    <div className="h-[11px] pl-[47px] text-[8px] leading-[11px] text-[#5555f0]">104....</div>
    <div className="flex h-[19px] leading-[17px]">
      <span className="flex w-[53px] justify-end border-r border-b border-[#999] pr-[7px] whitespace-nowrap">
        貨ペアリスト
      </span>
      <span className="flex-1 overflow-hidden border-b border-[#aaa] bg-[#ececec] pl-[9px] text-[10px] whitespace-nowrap text-[#999]">
        ティックチャー
      </span>
    </div>
    <div className="flex h-[17px] items-center bg-[#f0f0f0]">
      <span className="h-[12px] w-[118px] bg-linear-to-r from-[#c8d7e7] to-[#a9c5e4]">
        ーター
      </span>
      <svg viewBox="0 0 5 5" className="ml-[4px] w-[5px]" stroke="#444">
        <path d="M0 0l5 5M5 0L0 5" />
      </svg>
    </div>
    <div className="relative flex">
      <ul className="w-[128px] border-r border-[#ddd] bg-white whitespace-nowrap">
        <li className="h-[15px] leading-[17px]">XMTrading</li>
        <li className="flex h-[15px] items-center">
          <svg viewBox="0 0 12 12" className="mr-[6px] w-[12px]">
            <path d="M0 5l5-4 6 4v7H0z" fill="#e8b53a" />
            <path d="M0 6h7v6H0z" fill="#8cc63a" />
            <circle cx="6" cy="4" r="2.5" fill="#f6d35a" />
          </svg>
          口座
        </li>
        <li className="flex h-[15px] items-center">
          <svg viewBox="0 0 28 14" className="mr-[7px] ml-[2px] w-[26px]" fill="none">
            <path d="M0.5 4.5h5v5h-5zM7 7h8" stroke="#ccc" />
            <rect x="17" y="1" width="10" height="12" rx="2" fill="#2f9be8" />
            <path d="M20 3v7M24 4v7M20 7h4" stroke="#d9f0ff" strokeWidth="1.5" />
          </svg>
          XMTrading-Real 252
        </li>
        <li className="flex h-[15px] items-center">
          <svg viewBox="0 0 28 14" className="mr-[3px] ml-[22px] w-[26px]" fill="none">
            <path d="M0.5 0v7.5h8" stroke="#ccc" />
            <circle cx="20" cy="4.5" r="3.5" fill="#f1c244" stroke="#b98a14" />
            <path d="M15 13c0-7 10-7 11 0z" fill="#eebb33" stroke="#b98a14" />
          </svg>
          <span className="h-[12px] flex-1 bg-linear-to-b from-[#ebebeb] to-[#f6f6f6]" />
        </li>
        <li className="flex h-[14px] items-center">
          <svg viewBox="0 0 12 12" className="mr-[6px] w-[11px]">
            <rect x="0" y="1" width="11" height="10" fill="#f7d95b" stroke="#d0a42a" />
            <path d="M4 9c2 0 2-6 5-6M4 6h4" stroke="#8a6d10" fill="none" />
          </svg>
          インディケータ
        </li>
        <li className="flex h-[14px] items-center">
          <svg viewBox="0 0 13 12" className="mr-[5px] w-[12px]">
            <path d="M4 6h7v5H5z" fill="#f0c64a" />
            <path d="M0 4l6-3 7 4-6 3z" fill="#3f97dc" stroke="#2a72b0" strokeWidth="0.6" />
          </svg>
          エキスパートアドバイザ
        </li>
        <li className="flex h-[15px] items-center">
          <svg viewBox="0 0 12 12" className="mr-[6px] w-[11px]">
            <path d="M1 1h8v3H6v4h4v3H3V4H1z" fill="#f3cf58" stroke="#c4962a" />
          </svg>
          スクリプト
        </li>
      </ul>
      <span className="min-h-full flex-1 bg-[#f2f2f2]" />
      <div className="absolute top-[12px] left-[7px] h-[57px] w-[121px] border-4 border-[#ff2600]" />
    </div>
  </div>
);

const ConnectionLens = () => (
  <div className="absolute top-[371px] left-[668px] size-[184px] overflow-hidden rounded-full border-2 border-[#7d7d7d] bg-[#ededed]">
    <div className="h-[50px] border-b-2 border-[#d2d2d2] bg-[#efefef]" />
    <div className="h-[46px] border-b border-[#cfdcec] bg-[#ededed] pt-[4px] pl-[17px]">
      <div className="flex h-[42px] w-[113px] items-center overflow-hidden border-[5px] border-[#ff2600] bg-[#eee] pl-[3px]">
        <svg viewBox="0 0 31 24" className="w-[31px] shrink-0">
          {[0, 1, 2, 3, 4, 5].map((i) => (
            <g key={i}>
              <rect x={i * 5.2} y="0" width="4.2" height={19 - i * 3} fill="#9cae84" />
              <rect x={i * 5.2} y={20 - i * 3} width="4.2" height={4 + i * 3} fill="#7d8b9c" />
            </g>
          ))}
        </svg>
        <span className="ml-[5px] font-['Liberation_Sans',sans-serif] text-[15px] whitespace-nowrap text-[#555]">
          300/11 kb
        </span>
      </div>
    </div>
    <div className="h-[90px] bg-[#fafafa]" />
  </div>
);

const App = () => (
  <div className="relative overflow-hidden bg-[#f0f0f0] font-['Open_Sans','Noto_Sans_CJK_JP',sans-serif] text-[6px] leading-[9px] [font-feature-settings:'palt']">
    <TopBars />
    <div className="flex gap-[2px] border-b border-[#f0f0f0]">
      <SidePanel />
      <Workspace />
    </div>
    <Terminal />
    <StatusBar />
    <NavigatorLens />
    <ConnectionLens />
  </div>
);

export default App;
